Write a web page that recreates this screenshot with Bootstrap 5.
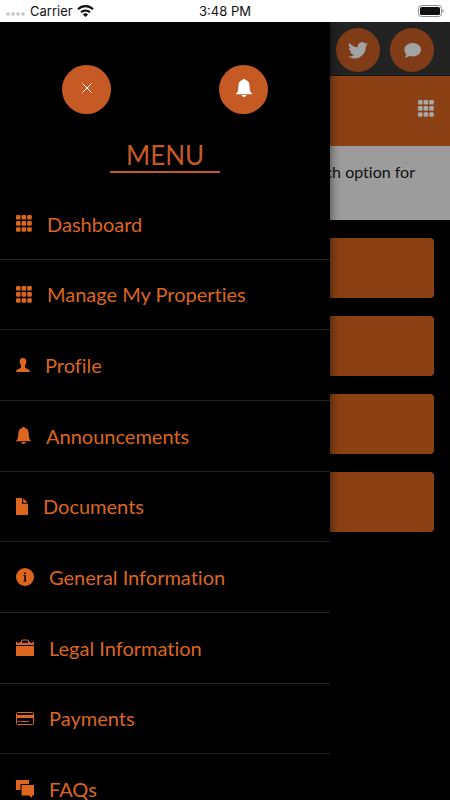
<!DOCTYPE html>
<html lang="en">
<head>
<meta charset="utf-8">
<meta name="viewport" content="width=device-width, initial-scale=1">
<title>Menu</title>
<link href="https://cdn.jsdelivr.net/npm/bootstrap@5.3.0/dist/css/bootstrap.min.css" rel="stylesheet">
<style>
  body { font-family: Lato, "Open Sans", sans-serif; background: #000; font-variant-ligatures: none; }
  svg { display: block; fill: currentColor; flex: none; }
  .app { height: 100vh; }
  .status { height: 22px; background: #fff; color: #111; font: 13px/22px Inter, "Liberation Sans", sans-serif; padding: 0 6px; }
  .status > * { flex: 1 1 0; }
  .signal { fill: #c4c4c4; }
  .topbar { background: #222; padding: 6px 16px 3px; gap: 10px; border-bottom: 1px solid #141414; }
  .round { border: 0; border-radius: 50%; padding: 0; display: flex; align-items: center; justify-content: center; }
  .round-dim { width: 44px; height: 44px; background: #803b17; color: #a3a3a3; }
  .round-lit { width: 49px; height: 49px; background: #c55a25; color: #fff; }
  .banner { background: #8b4113; height: 70px; padding: 0 16px 6px; }
  .banner button { color: #a8a8a8; }
  .note { background: #9c9c9c; color: #111; height: 74px; padding: 14px 35px; font-size: 16px; line-height: 24px; }
  .tiles { padding: 18px 16px; gap: 18px; }
  .tile { height: 60px; border: 0; border-radius: 4px; background: #8b4113; }
  .drawer { width: 73.4%; background: #000; color: #c55a25; box-shadow: 0 0 10px rgba(0,0,0,.6); }
  .actions { padding: 43px 62px 0; }
  .heading { font-size: 26px; line-height: 31px; margin: 26px auto 16px; padding: 0 16px; border-bottom: 2px solid #c55a25; font-weight: 400; }
  .menu { display: grid; grid-auto-rows: 1fr; min-height: 636px; }
  .menu li { border-bottom: 1px solid #222; }
  .menu a { color: #dc661e; gap: 15px; padding: 0 16px; font-size: 20px; line-height: 24px; }
</style>
<script src="https://cdn.jsdelivr.net/npm/bootstrap@5.3.0/dist/js/bootstrap.bundle.min.js"></script>
</head>
<body>
<svg width="0" height="0" class="position-absolute" aria-hidden="true">
  <symbol id="grid" viewBox="0 0 16 17"><rect width="4.6" height="4.6" rx="1.2"/><rect x="5.6" width="4.6" height="4.6" rx="1.2"/><rect x="11.2" width="4.6" height="4.6" rx="1.2"/><rect y="6.1" width="4.6" height="4.6" rx="1.2"/><rect x="5.6" y="6.1" width="4.6" height="4.6" rx="1.2"/><rect x="11.2" y="6.1" width="4.6" height="4.6" rx="1.2"/><rect y="12.2" width="4.6" height="4.6" rx="1.2"/><rect x="5.6" y="12.2" width="4.6" height="4.6" rx="1.2"/><rect x="11.2" y="12.2" width="4.6" height="4.6" rx="1.2"/></symbol>
  <symbol id="bell" viewBox="0 0 16 18"><path d="M8 0c.8 0 1.400.4 1.500.9C12.300 1.500 13.500 3.800 13.600 7c.1 4.200.4 6.200 2.400 7.600v.6H0v-.6C2 13.200 2.300 11.200 2.400 7 2.500 3.800 3.700 1.500 6.500.9 6.600.4 7.200 0 8 0zM5.600 16h4.800c-.3 1.300-1.200 2-2.400 2s-2.100-.7-2.400-2z"/></symbol>
</svg>

<div class="app d-flex flex-column overflow-hidden">
  <header class="status d-flex align-items-center">
    <div class="d-flex align-items-center">
      <svg class="signal mt-1" width="20" height="6" viewBox="0 0 20 6"><circle cx="2" cy="4" r="1.800"/><circle cx="7" cy="4" r="1.800"/><circle cx="12" cy="4" r="1.800"/><circle cx="17" cy="4" r="1.800"/></svg>
      <span class="ms-1">Carrier</span>
      <svg class="ms-1" width="17" height="12" viewBox="0 0 17 12"><g fill="none" stroke="currentColor" stroke-width="2.100"><path d="M1 4.300C5.200.1 11.800.1 16 4.300"/><path d="M4 7.300c2.500-2.500 6.500-2.500 9 0"/></g><path d="M8.500 12 5.900 9.400c1.500-1.500 3.700-1.500 5.200 0z"/></svg>
    </div>
    <div class="text-center">3:48 PM</div>
    <div class="d-flex justify-content-end">
      <svg width="26" height="12" viewBox="0 0 26 12"><rect x=".5" y=".5" width="23" height="11" rx="3" fill="none" stroke="#8a8a8a"/><rect x="2" y="2" width="20" height="8" rx="1.500"/><path d="M24.600 4v4c1.500-.5 1.500-3.500 0-4z" fill="#8a8a8a"/></svg>
    </div>
  </header>

  <div class="position-relative flex-grow-1 overflow-hidden">
    <main>
      <div class="topbar d-flex justify-content-end">
        <button class="round round-dim" aria-label="Twitter"><svg width="20" height="17" viewBox="0 0 24 20"><path d="M24 2.400c-.9.400-1.800.7-2.800.8 1-.6 1.800-1.600 2.200-2.700-1 .6-2 1-3.100 1.200A4.900 4.900 0 0 0 11.900 6.200C7.800 6 4.200 4 1.700.9.400 3.200 1 6.100 3.200 7.500c-.8 0-1.600-.2-2.200-.6 0 2.300 1.600 4.400 3.900 4.900-.7.200-1.500.2-2.200.1.600 2 2.400 3.400 4.600 3.400A9.900 9.900 0 0 1 0 17.300C2.200 18.700 4.800 19.500 7.500 19.500c9.100 0 14.300-7.700 14-14.600 1-.7 1.800-1.600 2.500-2.500z"/></svg></button>
        <button class="round round-dim" aria-label="Chat"><svg width="17" height="15" viewBox="0 0 17 15"><path d="M8.700 0C13.300 0 17 3 17 6.700s-3.700 6.700-8.300 6.700c-1.200 0-2.300-.2-3.300-.6C4.200 13.900 2.500 14.600.6 14.600c1-1 1.400-2.100 1.500-3.400C1 10 .4 8.500.4 6.700.4 3 4.100 0 8.700 0z"/></svg></button>
      </div>
      <div class="banner d-flex align-items-center justify-content-end">
        <button class="btn p-0 border-0" aria-label="Open menu"><svg width="16" height="17"><use href="#grid"/></svg></button>
      </div>
      <p class="note text-end mb-0">each option for</p>
      <div class="tiles d-flex flex-column">
        <button class="tile" aria-label="Option 1"></button>
        <button class="tile" aria-label="Option 2"></button>
        <button class="tile" aria-label="Option 3"></button>
        <button class="tile" aria-label="Option 4"></button>
      </div>
    </main>

    <aside class="drawer position-absolute top-0 start-0 d-flex flex-column">
      <div class="actions d-flex justify-content-between">
        <button class="round round-lit" aria-label="Close"><svg class="mb-1" width="10" height="10" viewBox="0 0 10 10"><path d="m.5.5 9 9m0-9-9 9" stroke="currentColor"/></svg></button>
        <button class="round round-lit" aria-label="Notifications"><svg class="mb-1" width="16" height="18"><use href="#bell"/></svg></button>
      </div>
      <h1 class="heading">MENU</h1>
      <ul class="menu list-unstyled mb-0">
        <li><a class="d-flex align-items-center h-100 text-decoration-none" href="#"><svg width="16" height="17"><use href="#grid"/></svg><span>Dashboard</span></a></li>
        <li><a class="d-flex align-items-center h-100 text-decoration-none" href="#"><svg width="16" height="17"><use href="#grid"/></svg><span>Manage My Properties</span></a></li>
        <li><a class="d-flex align-items-center h-100 text-decoration-none" href="#"><svg width="14" height="14" viewBox="0 0 14 14"><path d="M7 0c2.300 0 3.400 1.400 3.300 3.600 0 2-.6 3-1.300 4v1.900c.3 1.200 4.700 1 5 4.500H0c.3-3.500 4.700-3.300 5-4.500V7.600c-.7-1-1.300-2-1.300-4C3.600 1.400 4.700 0 7 0z"/></svg><span>Profile</span></a></li>
        <li><a class="d-flex align-items-center h-100 text-decoration-none" href="#"><svg width="15" height="17"><use href="#bell"/></svg><span>Announcements</span></a></li>
        <li><a class="d-flex align-items-center h-100 text-decoration-none" href="#"><svg width="12" height="17" viewBox="0 0 12 17"><path d="M0 0h6v5.800h6V17H0z"/><path d="m7.200.3 4.500 4.400H7.200z"/></svg><span>Documents</span></a></li>
        <li><a class="d-flex align-items-center h-100 text-decoration-none" href="#"><svg width="18" height="18" viewBox="0 0 18 18"><circle cx="9" cy="9" r="9"/><path d="M8.200 4.500h1.600v1.700H8.200zM7.400 7.300h2.400v5.500h.8v.7H7.400v-.7h.9V8h-.9z" fill="#000"/></svg><span>General Information</span></a></li>
        <li><a class="d-flex align-items-center h-100 text-decoration-none" href="#"><svg width="18" height="17" viewBox="0 0 18 17"><path d="M0 7h18v10H0zM0 3h1.500v1h2V3H5v1h8V3h1.500v1h2V3H18v3H0z"/><path d="M5.500 4V2.500q0-1.500 1.500-1.500h4q1.500 0 1.500 1.500V4" fill="none" stroke="currentColor" stroke-width="1.200"/></svg><span>Legal Information</span></a></li>
        <li><a class="d-flex align-items-center h-100 text-decoration-none" href="#"><svg width="18" height="13" viewBox="0 0 18 13"><rect x=".5" y=".5" width="17" height="12" rx="1" fill="none" stroke="currentColor"/><path d="M0 3h18v3H0zM2 9h2v1H2zM5 9h8v1H5z"/></svg><span>Payments</span></a></li>
        <li><a class="d-flex align-items-center h-100 text-decoration-none" href="#"><svg width="18" height="18" viewBox="0 0 18 18"><path d="M0 0h13v4H4.500v6H0z"/><path d="M5.500 5H18v10.500h-2V18l-2.700-2.500H5.500z"/></svg><span>FAQs</span></a></li>
      </ul>
    </aside>
  </div>
</div>
</body>
</html>
